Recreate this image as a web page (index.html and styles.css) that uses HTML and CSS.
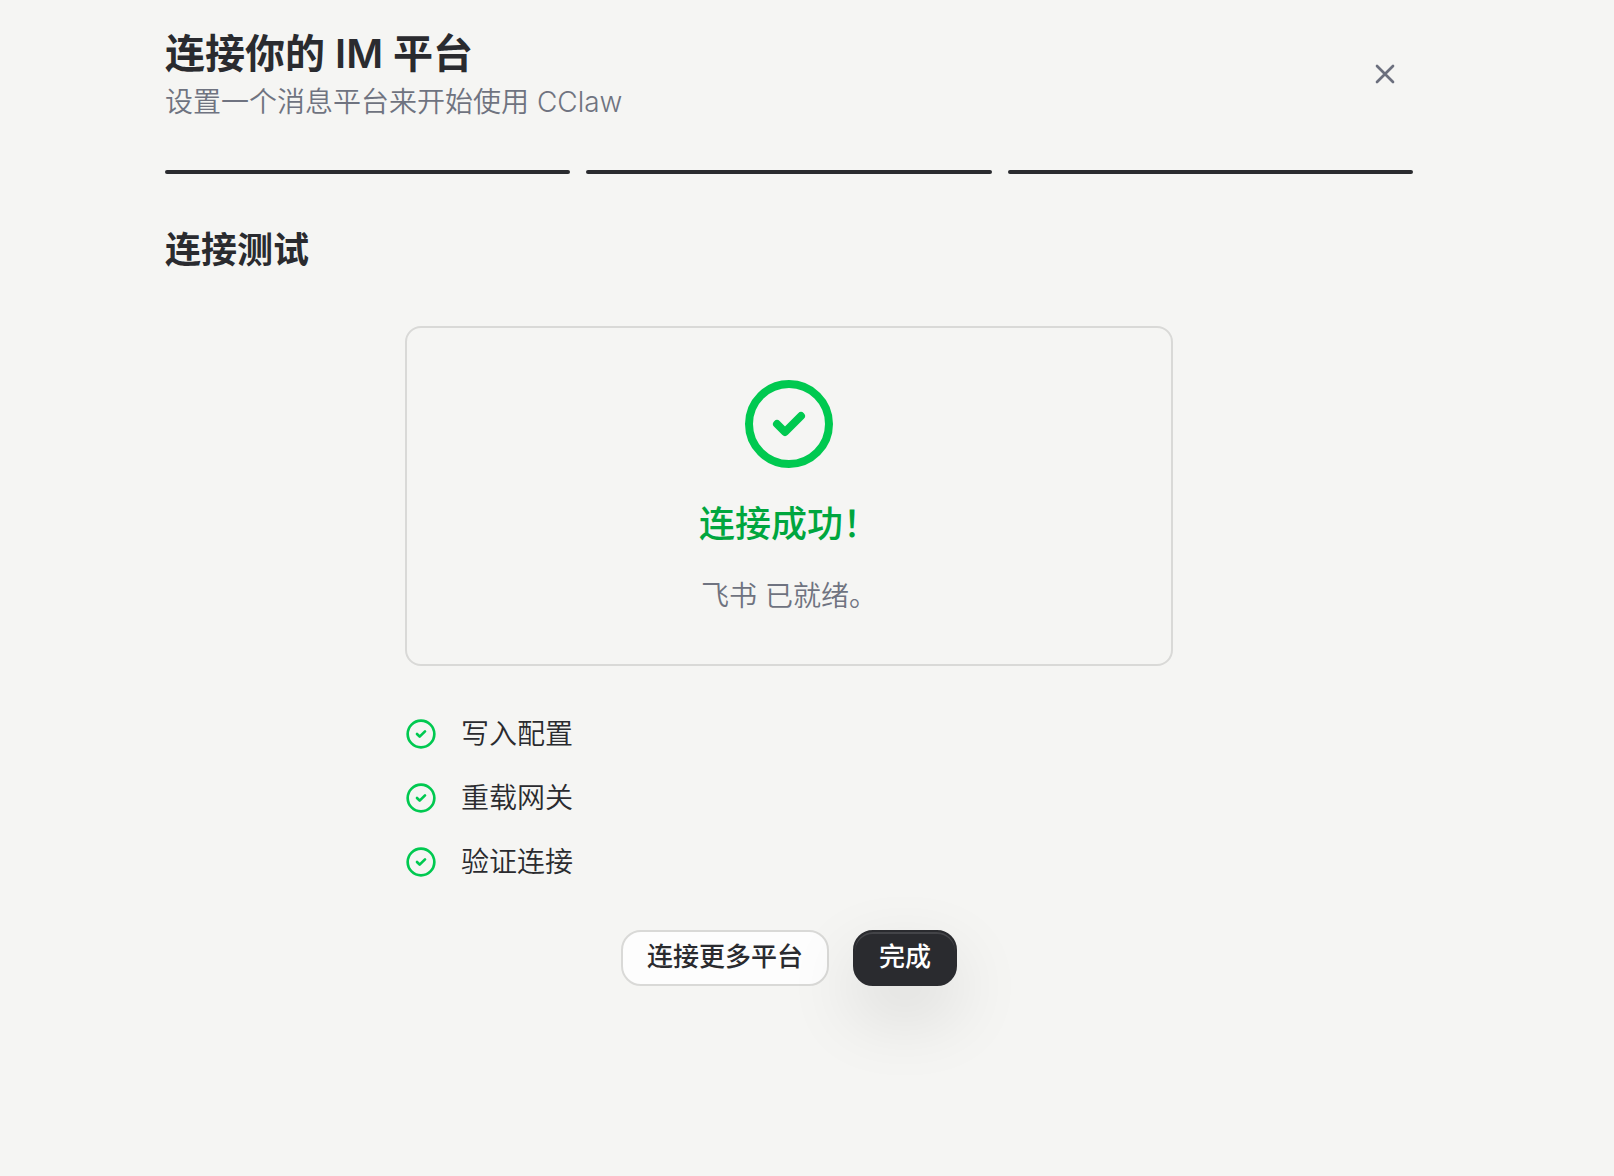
FILE: index.html
```html
<!DOCTYPE html>
<html lang="zh-CN">
<head>
    <meta charset="UTF-8">
    <meta name="viewport" content="width=device-width, initial-scale=1.0">
    <title>连接你的 IM 平台</title>
    <link rel="stylesheet" href="styles.css">
</head>
<body>
    <main class="wizard">
        <header class="header">
            <div>
                <h1 class="title">连接你的 IM 平台</h1>
                <p class="subtitle">设置一个消息平台来开始使用 CClaw</p>
            </div>
            <button type="button" class="close" aria-label="关闭">
                <svg class="icon" viewBox="0 0 24 24"><path d="M18 6 6 18M6 6l12 12"/></svg>
            </button>
        </header>

        <div class="progress">
            <span class="bar"></span>
            <span class="bar"></span>
            <span class="bar"></span>
        </div>

        <h2 class="step-title">连接测试</h2>

        <div class="content">
            <section class="result">
                <svg class="icon icon-large" viewBox="0 0 24 24"><circle cx="12" cy="12" r="10"/><path d="m9 12 2 2 4-4"/></svg>
                <h3 class="result-title">连接成功！</h3>
                <p class="result-text">飞书 已就绪。</p>
            </section>

            <ul class="checks">
                <li class="check">
                    <svg class="icon icon-green" viewBox="0 0 24 24"><circle cx="12" cy="12" r="10"/><path d="m9 12 2 2 4-4"/></svg>
                    <span>写入配置</span>
                </li>
                <li class="check">
                    <svg class="icon icon-green" viewBox="0 0 24 24"><circle cx="12" cy="12" r="10"/><path d="m9 12 2 2 4-4"/></svg>
                    <span>重载网关</span>
                </li>
                <li class="check">
                    <svg class="icon icon-green" viewBox="0 0 24 24"><circle cx="12" cy="12" r="10"/><path d="m9 12 2 2 4-4"/></svg>
                    <span>验证连接</span>
                </li>
            </ul>

            <div class="actions">
                <button type="button" class="btn">连接更多平台</button>
                <button type="button" class="btn btn-primary">完成</button>
            </div>
        </div>
    </main>
</body>
</html>
```
FILE: styles.css
```css
* {
    box-sizing: border-box;
}
body {
    margin: 0;
    min-height: 100vh;
    padding: 26px 36px 48px 0;
    background-color: #f5f5f3;
    color: #2a2b2f;
    font-family: Inter, "Noto Sans CJK SC", sans-serif;
    font-size: 28px;
    font-weight: 350;
    line-height: 40px;
}
h1, h2, h3, p, ul {
    margin: 0;
    padding: 0;
}
button {
    font-family: inherit;
    cursor: pointer;
}
.wizard {
    max-width: 1248px;
    margin: 0 auto;
}

/* Header */
.header {
    display: flex;
    align-items: center;
    justify-content: space-between;
}
.title {
    font-size: 40px;
    font-weight: 600;
    line-height: 56px;
}
.subtitle, .result-text {
    color: #6f7380;
}
.close {
    display: flex;
    padding: 12px;
    border: none;
    border-radius: 16px;
    background: none;
    color: #6b6f7d;
}
.icon {
    width: 32px;
    height: 32px;
    fill: none;
    stroke: currentColor;
    stroke-width: 2;
    stroke-linecap: round;
    stroke-linejoin: round;
}
.icon-green {
    color: #00c950;
}
.icon-large {
    width: 96px;
    height: 96px;
    color: #00c950;
}

/* Step bars */
.progress {
    display: flex;
    gap: 16px;
    margin: 48px 0;
}
.bar {
    flex: 1;
    height: 4px;
    border-radius: 2px;
    background-color: #2a2b2f;
}
.step-title {
    margin-bottom: 48px;
    font-size: 36px;
    font-weight: 600;
    line-height: 56px;
}

.content {
    display: flex;
    flex-direction: column;
    gap: 48px;
    max-width: 768px;
    margin: 0 auto;
}
.result {
    display: flex;
    flex-direction: column;
    align-items: center;
    gap: 24px;
    padding: 48px;
    border: 2px solid #d9d9d7;
    border-radius: 16px;
}
.result-title {
    color: #00a63e;
    font-size: 36px;
    font-weight: 500;
    line-height: 56px;
}
.checks {
    display: flex;
    flex-direction: column;
    gap: 24px;
    list-style: none;
}
.check {
    display: flex;
    align-items: center;
    gap: 24px;
}

/* Buttons */
.actions {
    display: flex;
    justify-content: center;
    gap: 24px;
}
.btn {
    height: 56px;
    padding: 0 24px 2px;
    border: 2px solid #d9d9d7;
    border-radius: 20px;
    background-color: #fdfdfd;
    color: #2a2b2f;
    font-size: 26px;
    font-weight: 500;
    line-height: 40px;
}
.btn-primary {
    border-color: #2a2b2f;
    background-color: #2a2b2f;
    color: #fff;
    box-shadow: inset 0 2px 0 rgba(255, 255, 255, 0.12), 0 28px 72px rgba(0, 0, 0, 0.12);
}
```
